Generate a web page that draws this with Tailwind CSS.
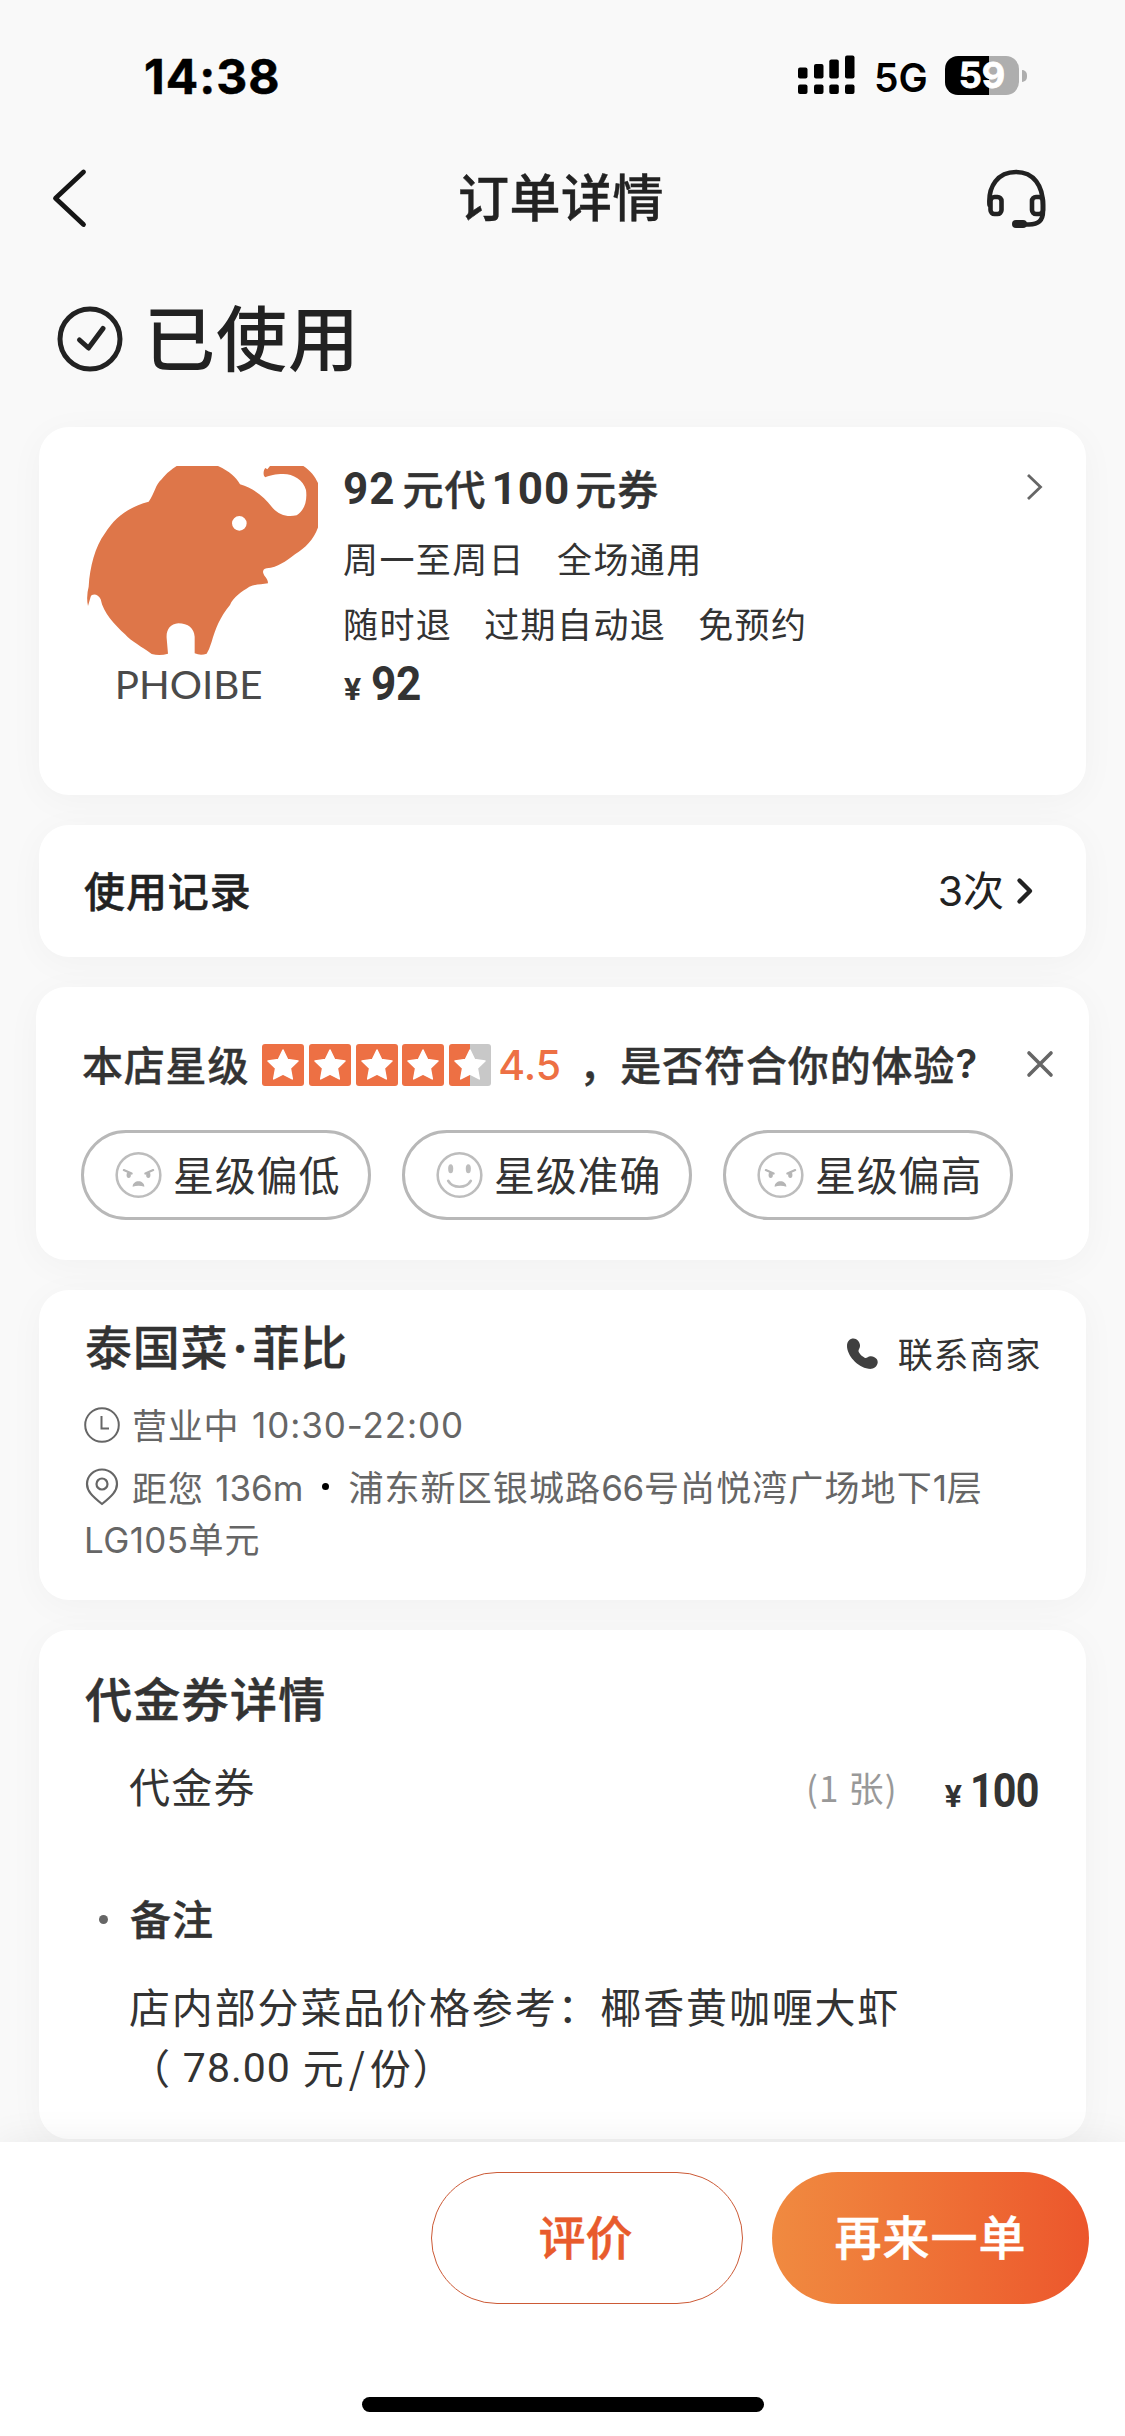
<!DOCTYPE html>
<html lang="zh-CN">
<head>
<meta charset="utf-8">
<title>订单详情</title>
<script src="https://cdn.jsdelivr.net/npm/@tailwindcss/browser@4"></script>
</head>
<body class="bg-[#f9f9f9] text-[#333]">
<svg class="hidden">
  <defs>
    <symbol id="star" viewBox="0 0 42 42"><path d="M21 6 L25.6 15.6 L36 17 L28.4 24.3 L30.3 34.9 L21 30.2 L11.7 34.9 L13.6 24.3 L6 17 L16.4 15.6 Z" fill="#fff" stroke="#fff" stroke-width="1.5" stroke-linejoin="round"/></symbol>
    <symbol id="angry" viewBox="0 0 48 48"><circle cx="24" cy="24" r="22.3" fill="none" stroke="#bdbdbd" stroke-width="2.6"/><path d="M9 19 L17 22.500 M39 19 L31 22.500" stroke="#b5b5b5" stroke-width="2.200" stroke-linecap="round"/><ellipse cx="14" cy="24" rx="2.200" ry="3" fill="#b5b5b5"/><ellipse cx="34" cy="24" rx="2.200" ry="3" fill="#b5b5b5"/><path d="M18 36 C18 28.500 30 28.500 30 36 Q24 34 18 36 Z" fill="#b5b5b5"/></symbol>
    <symbol id="smile" viewBox="0 0 48 48"><circle cx="24" cy="24" r="22.3" fill="none" stroke="#bdbdbd" stroke-width="2.6"/><ellipse cx="15" cy="17.500" rx="2.600" ry="4.600" fill="#bdbdbd"/><ellipse cx="33" cy="17.500" rx="2.600" ry="4.600" fill="#bdbdbd"/><path d="M12.500 30 C17 38 31 38 35.500 30" fill="none" stroke="#bdbdbd" stroke-width="2.800" stroke-linecap="round"/></symbol>
  </defs>
</svg>
<div class="relative flex h-[2436px] w-[1125px] flex-col overflow-hidden font-['Noto_Sans_CJK_SC',sans-serif]">

  <!-- status bar -->
  <div class="flex h-[152px] shrink-0 items-center justify-between pr-[98px] pl-[144px] font-['Inter',sans-serif] text-black">
    <span class="mt-0.5 text-[48px] font-bold leading-[60px] tracking-[1px] [-webkit-text-stroke:0.5px]">14:38</span>
    <div class="flex items-center">
      <svg class="-mt-0.5 h-10 w-[58px]" viewBox="0 0 58 40"><rect x="0" y="12.500" width="9.500" height="11" rx="2"/><rect x="16" y="9" width="9.500" height="14.500" rx="2"/><rect x="31.300" y="4.500" width="9.500" height="19" rx="2"/><rect x="47" y="0.500" width="9.500" height="23" rx="2"/><rect x="0" y="29.500" width="9.500" height="9.500" rx="2"/><rect x="16" y="29.500" width="9.500" height="9.500" rx="2"/><rect x="31.300" y="29.500" width="9.500" height="9.500" rx="2"/><rect x="47" y="29.500" width="9.500" height="9.500" rx="2"/></svg>
      <span class="mt-1 ml-[18px] w-[53px] text-[39px] font-semibold leading-10">5G</span>
      <div class="ml-[18px] flex h-[39px] w-[74px] -mt-0.5 items-center justify-center rounded-[13px] bg-linear-to-r from-black from-59% to-[#aeaeae] to-59% text-[36px] font-bold leading-[39px] text-white [-webkit-text-stroke:0.8px]">59</div>
      <div class="ml-[3px] h-3 w-[5px] rounded-r-full bg-[#aeaeae]"></div>
    </div>
  </div>

  <!-- navigation -->
  <div class="flex h-[92px] shrink-0 items-center justify-between pr-[78px] pl-[52px]">
    <svg class="h-[60px] w-9" viewBox="0 0 36 60" fill="none" stroke="#161616" stroke-width="4.800" stroke-linecap="round" stroke-linejoin="round"><path d="M31.500 4 L3.500 30.300 L31.500 56.500"/></svg>
    <h1 class="-mt-1.5 ml-[49px] text-[51px] font-medium leading-[60px] tracking-[0.500px] text-[#222] [-webkit-text-stroke:0.4px]">订单详情</h1>
    <svg class="h-[60px] w-[62px]" viewBox="0 0 62 60" fill="none" stroke="#222" stroke-width="4.600" stroke-linecap="round" stroke-linejoin="round"><path d="M4.500 37 C3 18 13 4 31 4 C49 4 58 18 58 37 V43 C58 53 53 56.500 44 56.500 H34"/><rect x="5.500" y="29" width="11" height="17" rx="4"/><rect x="47" y="29" width="11" height="17" rx="4"/><path d="M31 56 H38" stroke-width="8"/></svg>
  </div>

  <!-- order status -->
  <div class="flex h-[183px] shrink-0 items-center pl-[57px]">
    <svg class="mt-[7px] h-[66px] w-[66px]" viewBox="0 0 66 66" fill="none" stroke="#222" stroke-width="5" stroke-linecap="round" stroke-linejoin="round"><circle cx="33" cy="33" r="30"/><path d="M22.500 34 L31.500 42 L46 22.500"/></svg>
    <span class="-mt-[3px] ml-[21px] text-[71px] font-medium leading-[80px] tracking-[1px] text-[#222]">已使用</span>
  </div>

  <!-- voucher card -->
  <section class="ml-[39px] flex h-[368px] w-[1047px] shrink-0 rounded-[30px] bg-white pt-[39px] pr-[41px] pl-[47px] shadow-[0_6px_36px_rgba(0,0,0,0.035)]">
    <svg class="h-[257px] w-[232px]" viewBox="48 48 696 771">
      <path fill="#de7649" fill-rule="evenodd" d="M320 48 H444 C480 65 497 80 510 103 C555 115 585 145 605 170 C625 195 650 202 680 196 C705 180 712 150 708 120 C700 90 670 72 640 72 C615 72 600 76 586 82 C578 78 580 60 586 54 L592 58 L600 48 H700 C725 65 740 85 748 110 V220 C735 265 710 290 675 313 C645 335 625 352 590 355 C575 358 578 370 584 378 C590 386 594 390 594 400 C575 404 555 402 538 410 C515 425 490 440 480 465 C450 500 435 540 425 575 Q418 598 410 611 Q392 618 374 610 V560 C372 535 355 520 325 520 C300 522 288 540 290 565 L294 611 Q270 618 245 612 C215 590 185 575 165 553 C135 525 100 490 92 448 C85 430 65 430 62 440 L54 468 Q48 440 56 410 C60 350 75 290 105 250 C135 200 180 170 236 155 C255 130 255 105 275 88 C290 68 305 58 320 48 Z M508 198 A22 22 0 1 0 508 242 A22 22 0 1 0 508 198 Z"/>
      <text x="134" y="746" font-family="Lato, sans-serif" font-size="118" fill="#4a4a4a" textLength="444" lengthAdjust="spacingAndGlyphs">PHOIBE</text>
    </svg>
    <div class="ml-[25px] flex flex-1 flex-col">
      <div class="-mt-[2px] flex h-[46px] items-center text-[41px] font-medium leading-[46px] tracking-[1px]"><span class="mt-[4px] font-['Roboto',sans-serif] text-[44px] font-bold">92</span><span class="ml-[7px] [-webkit-text-stroke:0.4px]">元代</span><span class="mt-[4px] ml-[5px] font-['Roboto',sans-serif] text-[44px] font-bold">100</span><span class="ml-[5px] [-webkit-text-stroke:0.4px]">元券</span></div>
      <div class="mt-[26px] flex h-[44px] gap-8 text-[35px] leading-[44px] tracking-[1.4px]"><span>周一至周日</span><span>全场通用</span></div>
      <div class="mt-[21px] flex h-[44px] gap-8 text-[35px] leading-[44px] tracking-[1.4px]"><span>随时退</span><span>过期自动退</span><span>免预约</span></div>
      <div class="mt-[14px] ml-px flex h-[50px] items-baseline font-['Roboto',sans-serif] font-bold leading-[50px]"><span class="text-[32px]">¥</span><span class="ml-[10px] inline-block origin-left scale-x-[0.92] text-[48px] tracking-[-0.500px]">92</span></div>
    </div>
    <svg class="mt-[7px] h-[28px] w-[19px]" viewBox="0 0 19 28" fill="none" stroke="#666" stroke-width="2.800"><path d="M2 2 L14.500 14 L2 26"/></svg>
  </section>

  <!-- usage records -->
  <section class="mt-[30px] ml-[39px] flex h-[132px] w-[1047px] shrink-0 items-center rounded-[30px] bg-white pr-[52px] pl-[45px] text-[#222] shadow-[0_6px_36px_rgba(0,0,0,0.035)]">
    <span class="-mt-[4px] flex-1 text-[41px] font-medium leading-[48px] tracking-[0.9px] [-webkit-text-stroke:0.5px]">使用记录</span>
    <span class="-mt-[3px] text-[41px] leading-[48px]"><span class="font-['Inter',sans-serif] text-[41px]">3</span>次</span>
    <svg class="ml-[12px] h-[28px] w-[18px]" viewBox="0 0 18 28" fill="none" stroke="#222" stroke-width="4.400" stroke-linecap="round" stroke-linejoin="round"><path d="M3.500 3.500 L14 14 L3.500 24.500"/></svg>
  </section>

  <!-- rating feedback -->
  <section class="mt-[30px] ml-[36px] h-[273px] w-[1053px] shrink-0 rounded-[30px] bg-white pt-[53px] pl-[46px] shadow-[0_6px_36px_rgba(0,0,0,0.035)]">
    <div class="flex h-[48px] items-center text-[41px] font-medium leading-[48px]">
      <span class="-mt-[3px] tracking-[0.8px] [-webkit-text-stroke:0.4px]">本店星级</span>
      <div class="mt-0.5 ml-[13px] flex w-[229px] justify-between">
        <div class="h-[42px] w-[42px] rounded-[3px] bg-[#ed7044]"><svg class="size-full"><use href="#star"/></svg></div>
        <div class="h-[42px] w-[42px] rounded-[3px] bg-[#ed7044]"><svg class="size-full"><use href="#star"/></svg></div>
        <div class="h-[42px] w-[42px] rounded-[3px] bg-[#ed7044]"><svg class="size-full"><use href="#star"/></svg></div>
        <div class="h-[42px] w-[42px] rounded-[3px] bg-[#ed7044]"><svg class="size-full"><use href="#star"/></svg></div>
        <div class="h-[42px] w-[42px] rounded-[3px] bg-linear-to-r from-[#ed7044] from-50% to-[#c8c8c8] to-50%"><svg class="size-full"><use href="#star"/></svg></div>
      </div>
      <span class="mt-0.5 ml-[7px] w-[62px] font-['Inter',sans-serif] font-medium text-[#ed7044]">4.5</span>
      <span class="-mt-[3px] ml-[19px] [-webkit-text-stroke:0.4px]">，</span>
      <span class="-mt-[3px] tracking-[0.9px] [-webkit-text-stroke:0.4px]">是否符合你的体验</span><span class="font-['Inter',sans-serif] text-[40px] font-semibold">?</span>
      <svg class="ml-[49px] h-[28px] w-[28px]" viewBox="0 0 28 28" stroke="#666" stroke-width="3.600" stroke-linecap="round"><path d="M3 3 L25 25 M25 3 L3 25"/></svg>
    </div>
    <div class="mt-[42px] -ml-px flex gap-[31px] text-[41px] leading-[48px] tracking-[0.8px]">
      <div class="flex h-[90px] w-[290px] items-center rounded-full border-3 border-[#b8b8b8] pl-[31px]"><svg class="mr-[11px] h-12 w-[47px]"><use href="#angry"/></svg><span class="-mt-[4px]">星级偏低</span></div>
      <div class="flex h-[90px] w-[290px] items-center rounded-full border-3 border-[#b8b8b8] pl-[31px]"><svg class="mr-[11px] h-12 w-[47px]"><use href="#smile"/></svg><span class="-mt-[4px]">星级准确</span></div>
      <div class="flex h-[90px] w-[290px] items-center rounded-full border-3 border-[#b8b8b8] pl-[31px]"><svg class="mr-[11px] h-12 w-[47px]"><use href="#angry"/></svg><span class="-mt-[4px]">星级偏高</span></div>
    </div>
  </section>

  <!-- shop -->
  <section class="mt-[30px] ml-[39px] h-[310px] w-[1047px] shrink-0 rounded-[30px] bg-white pt-[30px] pr-[45px] pl-[45px] shadow-[0_6px_36px_rgba(0,0,0,0.035)]">
    <div class="flex h-[56px] items-center">
      <span class="-mt-[3px] ml-px flex-1 text-[47px] font-medium leading-[56px] tracking-[0.8px] [-webkit-text-stroke:0.3px]">泰国菜<span class="mx-[3px] inline-block w-[18px] text-center font-['Inter',sans-serif] font-bold">·</span>菲比</span>
      <svg class="mt-[12px] h-8 w-8" viewBox="0 0 32 32" fill="#404040"><path d="M1 8 C1 3 4 0.500 7.500 0.500 C11 0.500 13.500 3.500 14 7 C14.300 11 11.500 11.500 13 14.500 C14.500 17 16.500 18.500 19 20 C21 20.500 22 18 25 18.300 C29.500 18.800 32 21.500 31.700 24.700 C31 29 27 31.500 22.500 30.800 C11 29 1 17 1 8 Z"/></svg>
      <span class="mt-[9px] ml-[20px] text-[35px] leading-[44px] tracking-[0.8px]">联系商家</span>
    </div>
    <div class="mt-[27px] flex h-[44px] items-center text-[35px] leading-[44px] tracking-[0.7px] text-[#666]">
      <svg class="h-[36px] w-[36px]" viewBox="0 0 36 36" fill="none" stroke="#666" stroke-width="2"><circle cx="18" cy="18" r="16.800"/><path d="M17.500 9 V21.500 H25"/></svg>
      <span class="-mt-[2px] ml-[12px]">营业中</span><span class="ml-[13px] font-['Inter',sans-serif] text-[35px] tracking-[0.9px]">10:30-22:00</span>
    </div>
    <div class="mt-[14px] text-[35px] leading-[51px] tracking-[1.100px] text-[#666]">
      <div class="flex h-[51px] items-center">
        <svg class="h-[38px] w-[36px]" viewBox="0 0 36 38" fill="none" stroke="#666" stroke-width="2.200"><path d="M18 36 C8 28 3 23 3 16 A15 14.500 0 0 1 33 16 C33 23 28 28 18 36 Z" stroke-linejoin="round"/><circle cx="18" cy="16" r="5.500"/></svg>
        <span class="ml-[12px]">距您</span><span class="mt-[3px] ml-[11px] font-['Inter',sans-serif] tracking-[0px]">136m</span>
        <span class="mr-[19px] ml-[19px] size-[7px] rounded-full bg-black"></span>
        <span>浦东新区银城路<span class="font-['Inter',sans-serif] tracking-[-0.300px]">66</span>号尚悦湾广场地下<span class="font-['Inter',sans-serif] tracking-[-0.300px]">1</span>层</span>
      </div>
      <div class="h-[51px]"><span class="font-['Inter',sans-serif] tracking-[0.400px]">LG105</span>单元</div>
    </div>
  </section>

  <!-- voucher details -->
  <section class="mt-[30px] ml-[39px] h-[509px] w-[1047px] shrink-0 rounded-[30px] bg-white pt-[40px] pr-[49px] pl-[45px] shadow-[0_6px_36px_rgba(0,0,0,0.035)]">
    <h2 class="-mt-[1px] ml-px h-[57px] text-[47px] font-medium leading-[56px] tracking-[1.300px] [-webkit-text-stroke:0.5px]">代金券详情</h2>
    <div class="mt-[35px] flex h-[48px] items-center pl-[45px] text-[41px] leading-[48px] tracking-[1.200px]">
      <span class="flex-1">代金券</span>
      <span class="mt-[4px] text-[35px] text-[#999]">(1 张)</span>
      <div class="mt-[16px] ml-[47px] flex items-baseline font-['Roboto',sans-serif] font-bold tracking-normal"><span class="text-[32px]">¥</span><span class="ml-[8px] w-[67px] text-[48px]"><span class="inline-block origin-left scale-x-[0.86] tracking-[-1px]">100</span></span></div>
    </div>
    <div class="mt-[84px] flex h-[48px] items-center pl-[15px] text-[41px] font-medium leading-[48px] tracking-[1px]">
      <span class="mt-[5px] mr-[22px] size-[9px] rounded-full bg-[#666]"></span><span class="-mt-px [-webkit-text-stroke:0.4px]">备注</span>
    </div>
    <div class="mt-[34px] pl-[45px] text-[41px] leading-[61px] tracking-[1.850px]">
      <div>店内部分菜品价格参考：椰香黄咖喱大虾</div>
      <div class="flex"><span>（</span><span class="mt-[2px] ml-[11px] font-['Roboto',sans-serif] tracking-[1px]">78.00</span><span class="ml-[12px]">元<span class="mx-[3px]">/</span>份）</span></div>
    </div>
  </section>

  <!-- action bar -->
  <footer class="relative mt-[3px] flex h-[294px] shrink-0 flex-col bg-white shadow-[0_0_36px_rgba(0,0,0,0.07)]">
    <div class="mt-[30px] flex justify-end gap-[29px] pr-[36px] text-[47px] font-medium leading-[56px]">
      <div class="flex h-[132px] w-[312px] items-center justify-center rounded-full border border-[#cc5a36] pr-[3px] pb-[7px] text-[#e85b2c] [-webkit-text-stroke:0.5px]">评价</div>
      <div class="flex h-[132px] w-[317px] items-center justify-center rounded-full bg-linear-to-r from-[#f08a40] to-[#ec562c] pb-[7px] tracking-[1px] text-white [-webkit-text-stroke:0.5px]">再来一单</div>
    </div>
    <div class="mt-[93px] ml-[362px] h-[15px] w-[402px] rounded-full bg-black"></div>
  </footer>
</div>
</body>
</html>
